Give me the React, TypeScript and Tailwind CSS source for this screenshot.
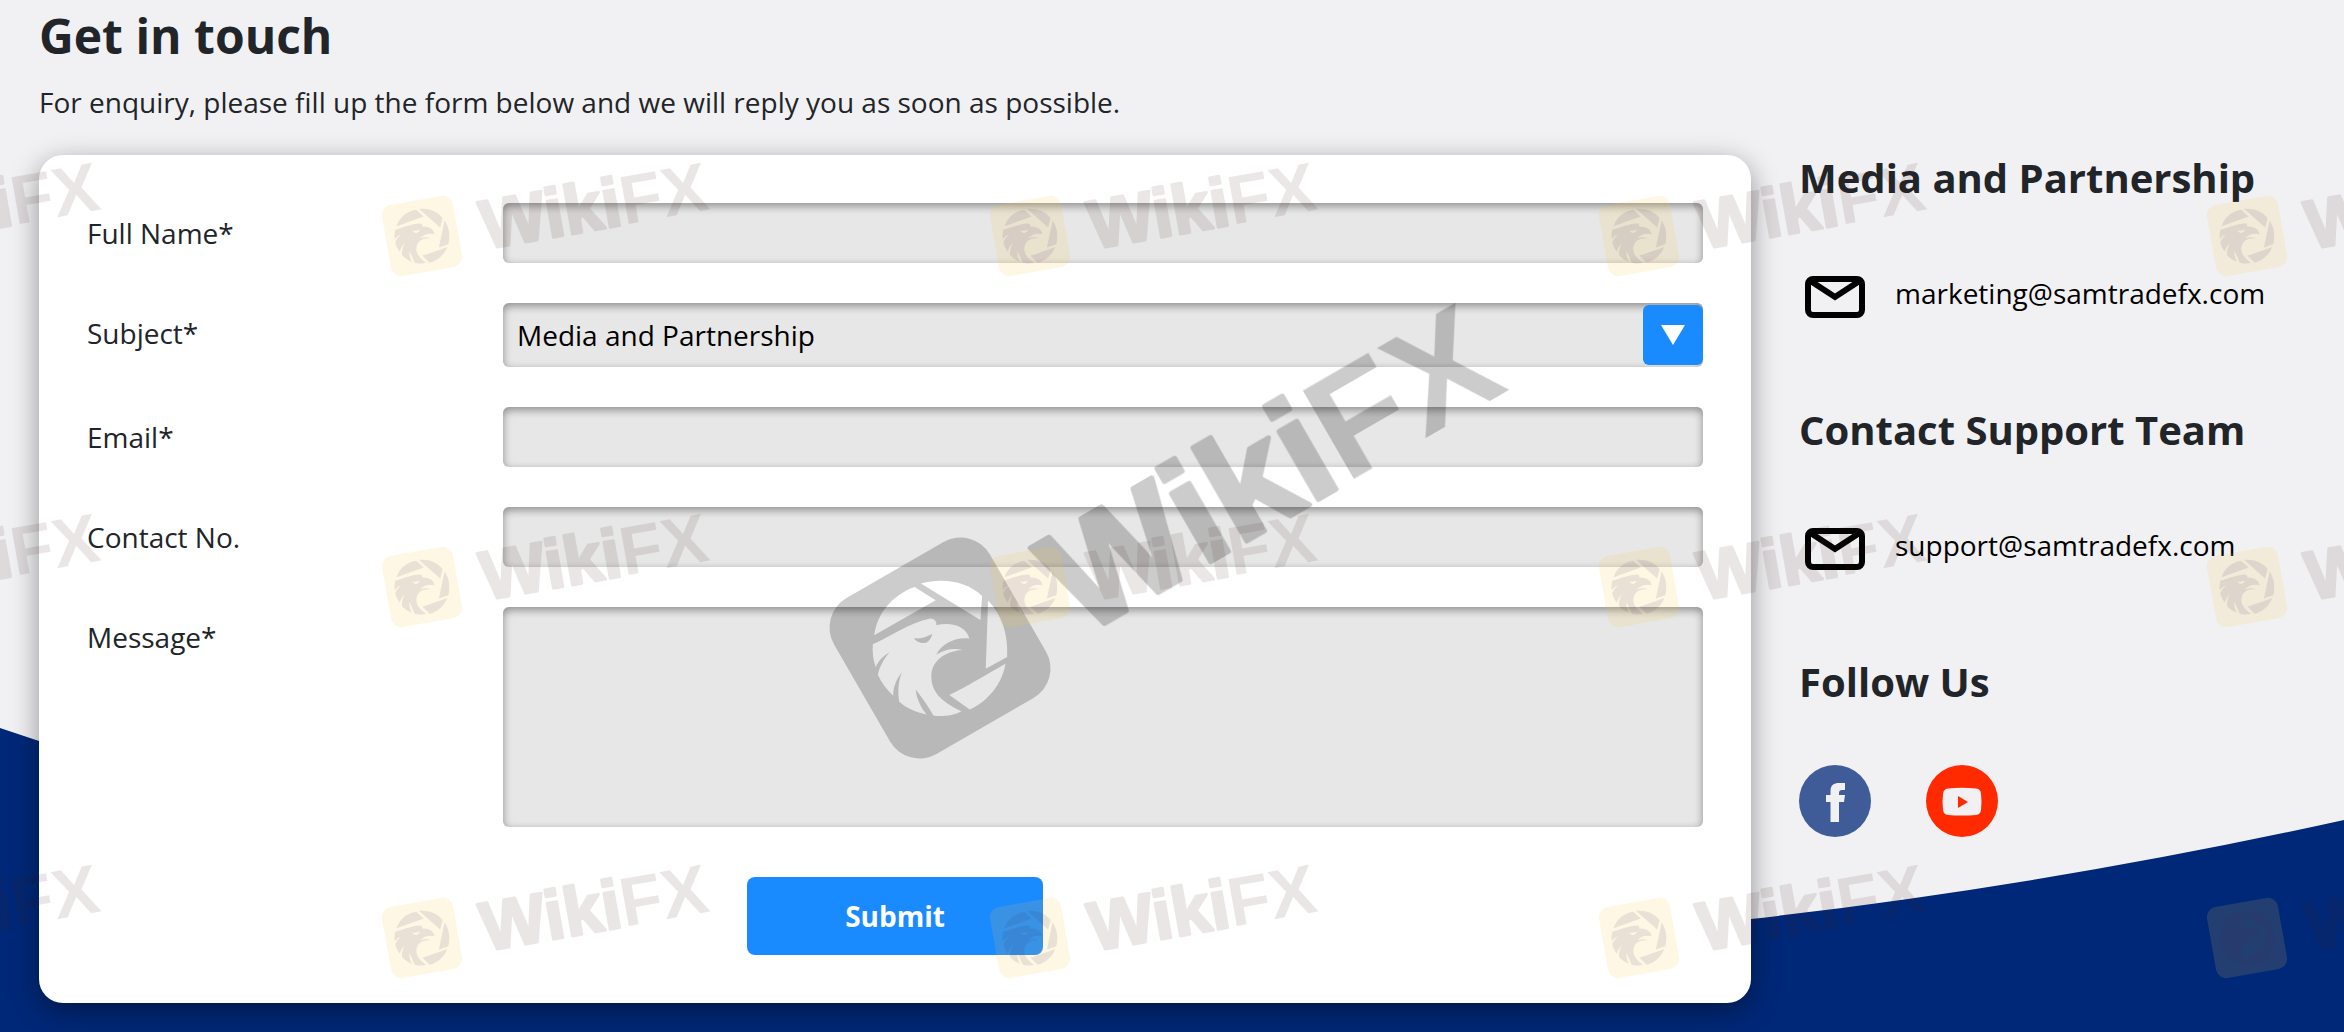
import { FormEvent, ReactNode, useState } from 'react';

const inputClass =
  'block w-full rounded-md bg-[#e7e7e7] px-3.5 text-[28px] text-black outline-none shadow-[inset_0_3px_8px_rgba(0,0,0,0.4)] focus:ring-2 focus:ring-[#1a8aff]';

const subjects = ['Media and Partnership', 'Contact Support Team'];

const stampColumns = [-187, 422, 1030, 1639, 2247];
const stampRows = [236, 587, 938];

function EagleMark() {
  return (
    <g transform="translate(-421 -445)">
      <path d="M345 262L408 302L224 407C232 340 280 285 345 262Z" />
      <path d="M364 252C430 234 500 245 547 289L542 361Z" />
      <path d="M565 303C605 345 625 400 622 472L558 507Z" />
      <path d="M617 492C608 550 565 605 510 629L449 586C490 566 560 525 617 492Z" />
      <path
        fillRule="evenodd"
        d="M220 434C270 412 330 370 392 357C404 358 412 365 410 377C455 366 500 380 509 417C470 412 428 430 410 465C435 448 465 444 488 451C430 455 395 488 395 530C395 585 440 612 485 634C460 648 420 652 401 646C385 618 365 590 348 569C352 600 365 625 381 644C350 638 320 625 299 606C293 570 298 540 307 517C290 540 280 565 281 588C262 570 245 548 235 525C240 500 255 475 270 458C250 470 235 485 229 503C220 480 218 455 220 434ZM343 415C365 420 385 408 398 403C392 425 380 432 366 430C355 428 347 422 343 415Z"
      />
    </g>
  );
}

function SmallStamp({ x, y }: { x: number; y: number }) {
  return (
    <g transform={`translate(${x} ${y}) rotate(-10)`}>
      <rect x="-36" y="-36" width="72" height="72" rx="10" fill="#f5c840" opacity="0.14" />
      <g transform="rotate(20) scale(0.136)" fill="#4a2c6c" opacity="0.11">
        <EagleMark />
      </g>
      <text
        x="60"
        y="24"
        fontSize="69"
        fontWeight="700"
        fill="#3f1616"
        stroke="#3f1616"
        opacity="0.1"
        fontFamily="'Liberation Sans', sans-serif"
      >
        <tspan strokeWidth="3" strokeLinejoin="round">Wiki</tspan>
        <tspan strokeWidth="0">FX</tspan>
      </text>
    </g>
  );
}

function LargeStamp() {
  return (
    <g transform="translate(940 648)" opacity="0.2">
      <mask id="eagle-cutout">
        <rect x="-200" y="-200" width="400" height="400" fill="#fff" />
        <g transform="scale(0.334)" fill="#000">
          <EagleMark />
        </g>
      </mask>
      <g mask="url(#eagle-cutout)">
        <rect x="-90" y="-90" width="180" height="180" rx="34" transform="rotate(-30)" />
      </g>
      <text
        x="128"
        y="61"
        transform="rotate(-30)"
        fontSize="149"
        fontWeight="700"
        stroke="#000"
        fontFamily="'Liberation Sans', sans-serif"
      >
        <tspan strokeWidth="5" strokeLinejoin="round">Wiki</tspan>
        <tspan strokeWidth="0">FX</tspan>
      </text>
    </g>
  );
}

function MailIcon() {
  return (
    <svg viewBox="0 0 72 72" className="size-[72px] shrink-0" fill="none" stroke="#000" aria-hidden="true">
      <rect x="9" y="18" width="54" height="36" rx="5" strokeWidth="6" />
      <path d="M10 19L36 36L62 19" strokeWidth="6" />
    </svg>
  );
}

function Field({ id, label, children }: { id: string; label: string; children: ReactNode }) {
  return (
    <div className="grid grid-cols-[416px_1fr] items-start">
      <label htmlFor={id} className="leading-[60px]">
        {label}
      </label>
      {children}
    </div>
  );
}

function EmailContact({ title, email }: { title: string; email: string }) {
  return (
    <section>
      <h2 className="text-[40px] leading-[46px] font-bold">{title}</h2>
      <a href={`mailto:${email}`} className="mt-[60px] flex items-center gap-6 text-black">
        <MailIcon />
        <span className="pb-2">{email}</span>
      </a>
    </section>
  );
}

export default function App() {
  const [subject, setSubject] = useState(subjects[0]);

  const handleSubmit = (e: FormEvent) => {
    e.preventDefault();
  };

  return (
    <div className="relative min-h-screen overflow-hidden bg-[#f1f1f3] font-['Open_Sans',sans-serif] text-[28px] text-[#212529]">
      {/* Blue wave behind the content */}
      <svg
        className="absolute inset-0 h-full w-full"
        viewBox="0 0 2344 1032"
        preserveAspectRatio="none"
        aria-hidden="true"
      >
        <path d="M0 728L39 741C400 860 1000 1010 1751 919Q2050 885 2344 820V1032H0Z" fill="#002878" />
      </svg>

      <main className="relative px-[39px] pt-2 pb-[29px]">
        <h1 className="text-5xl leading-[56px] font-bold">Get in touch</h1>
        <p className="mt-4 mb-[31px] leading-[44px]">
          For enquiry, please fill up the form below and we will reply you as soon as possible.
        </p>

        <div className="flex items-start gap-12">
          <form
            onSubmit={handleSubmit}
            className="flex flex-1 flex-col gap-10 rounded-3xl bg-white p-12 shadow-[0_8px_28px_rgba(0,0,0,0.4)]"
          >
            <Field id="name" label="Full Name*">
              <input id="name" type="text" className={`${inputClass} h-[60px]`} />
            </Field>
            <Field id="subject" label="Subject*">
              <div className="relative">
                <select
                  id="subject"
                  value={subject}
                  onChange={(e) => setSubject(e.target.value)}
                  className={`${inputClass} h-16 appearance-none`}
                >
                  {subjects.map((item) => (
                    <option key={item}>{item}</option>
                  ))}
                </select>
                <span className="pointer-events-none absolute top-0.5 right-0 flex size-[60px] items-center justify-center rounded-md bg-[#1a8aff]">
                  <svg viewBox="0 0 24 20" className="h-5 w-6" fill="#fff" aria-hidden="true">
                    <path d="M0 0H24L12 20Z" />
                  </svg>
                </span>
              </div>
            </Field>
            <Field id="email" label="Email*">
              <input id="email" type="email" className={`${inputClass} h-[60px]`} />
            </Field>
            <Field id="contact" label="Contact No.">
              <input id="contact" type="tel" className={`${inputClass} h-[60px]`} />
            </Field>
            <Field id="message" label="Message*">
              <textarea id="message" className={`${inputClass} h-[220px] resize-none py-3`} />
            </Field>
            <button
              type="submit"
              className="mt-2.5 h-[78px] w-[296px] self-center rounded-lg bg-[#1a8aff] font-bold text-white"
            >
              Submit
            </button>
          </form>

          <aside className="flex w-[506px] flex-col gap-[74px]">
            <EmailContact title="Media and Partnership" email="marketing@samtradefx.com" />
            <EmailContact title="Contact Support Team" email="support@samtradefx.com" />
            <section>
              <h2 className="text-[40px] leading-[46px] font-bold">Follow Us</h2>
              <div className="mt-[60px] flex gap-[55px]">
                <a href="#facebook" aria-label="Facebook">
                  <svg viewBox="0 0 72 72" className="size-[72px]">
                    <circle cx="36" cy="36" r="36" fill="#3f5b98" />
                    <path
                      d="M31.500 57V37H27V30H31.500V26C31.500 20 35 18 40 18H46V25H43C41 25 40 26 40 28V30H46L45 37H40V57Z"
                      fill="#f1f1f3"
                    />
                  </svg>
                </a>
                <a href="#youtube" aria-label="YouTube">
                  <svg viewBox="0 0 72 72" className="size-[72px]">
                    <circle cx="36" cy="36" r="36" fill="#ff2a00" />
                    <path
                      d="M22 23.500Q36 22 50 23.500Q55 24 55 29Q56 37 55 45Q54.500 49.500 50 50Q36 51 22 50Q17.500 49.500 17 45Q16 37 17 29Q17.500 24 22 23.500Z"
                      fill="#f1f1f3"
                    />
                    <path d="M32 31L42 37L32 43Z" fill="#ff2a00" />
                  </svg>
                </a>
              </div>
            </section>
          </aside>
        </div>
      </main>

      {/* Watermark overlay */}
      <svg className="pointer-events-none absolute inset-0 h-full w-full" aria-hidden="true">
        <LargeStamp />
        {stampRows.map((y) => stampColumns.map((x) => <SmallStamp key={`${x}-${y}`} x={x} y={y} />))}
      </svg>
    </div>
  );
}
